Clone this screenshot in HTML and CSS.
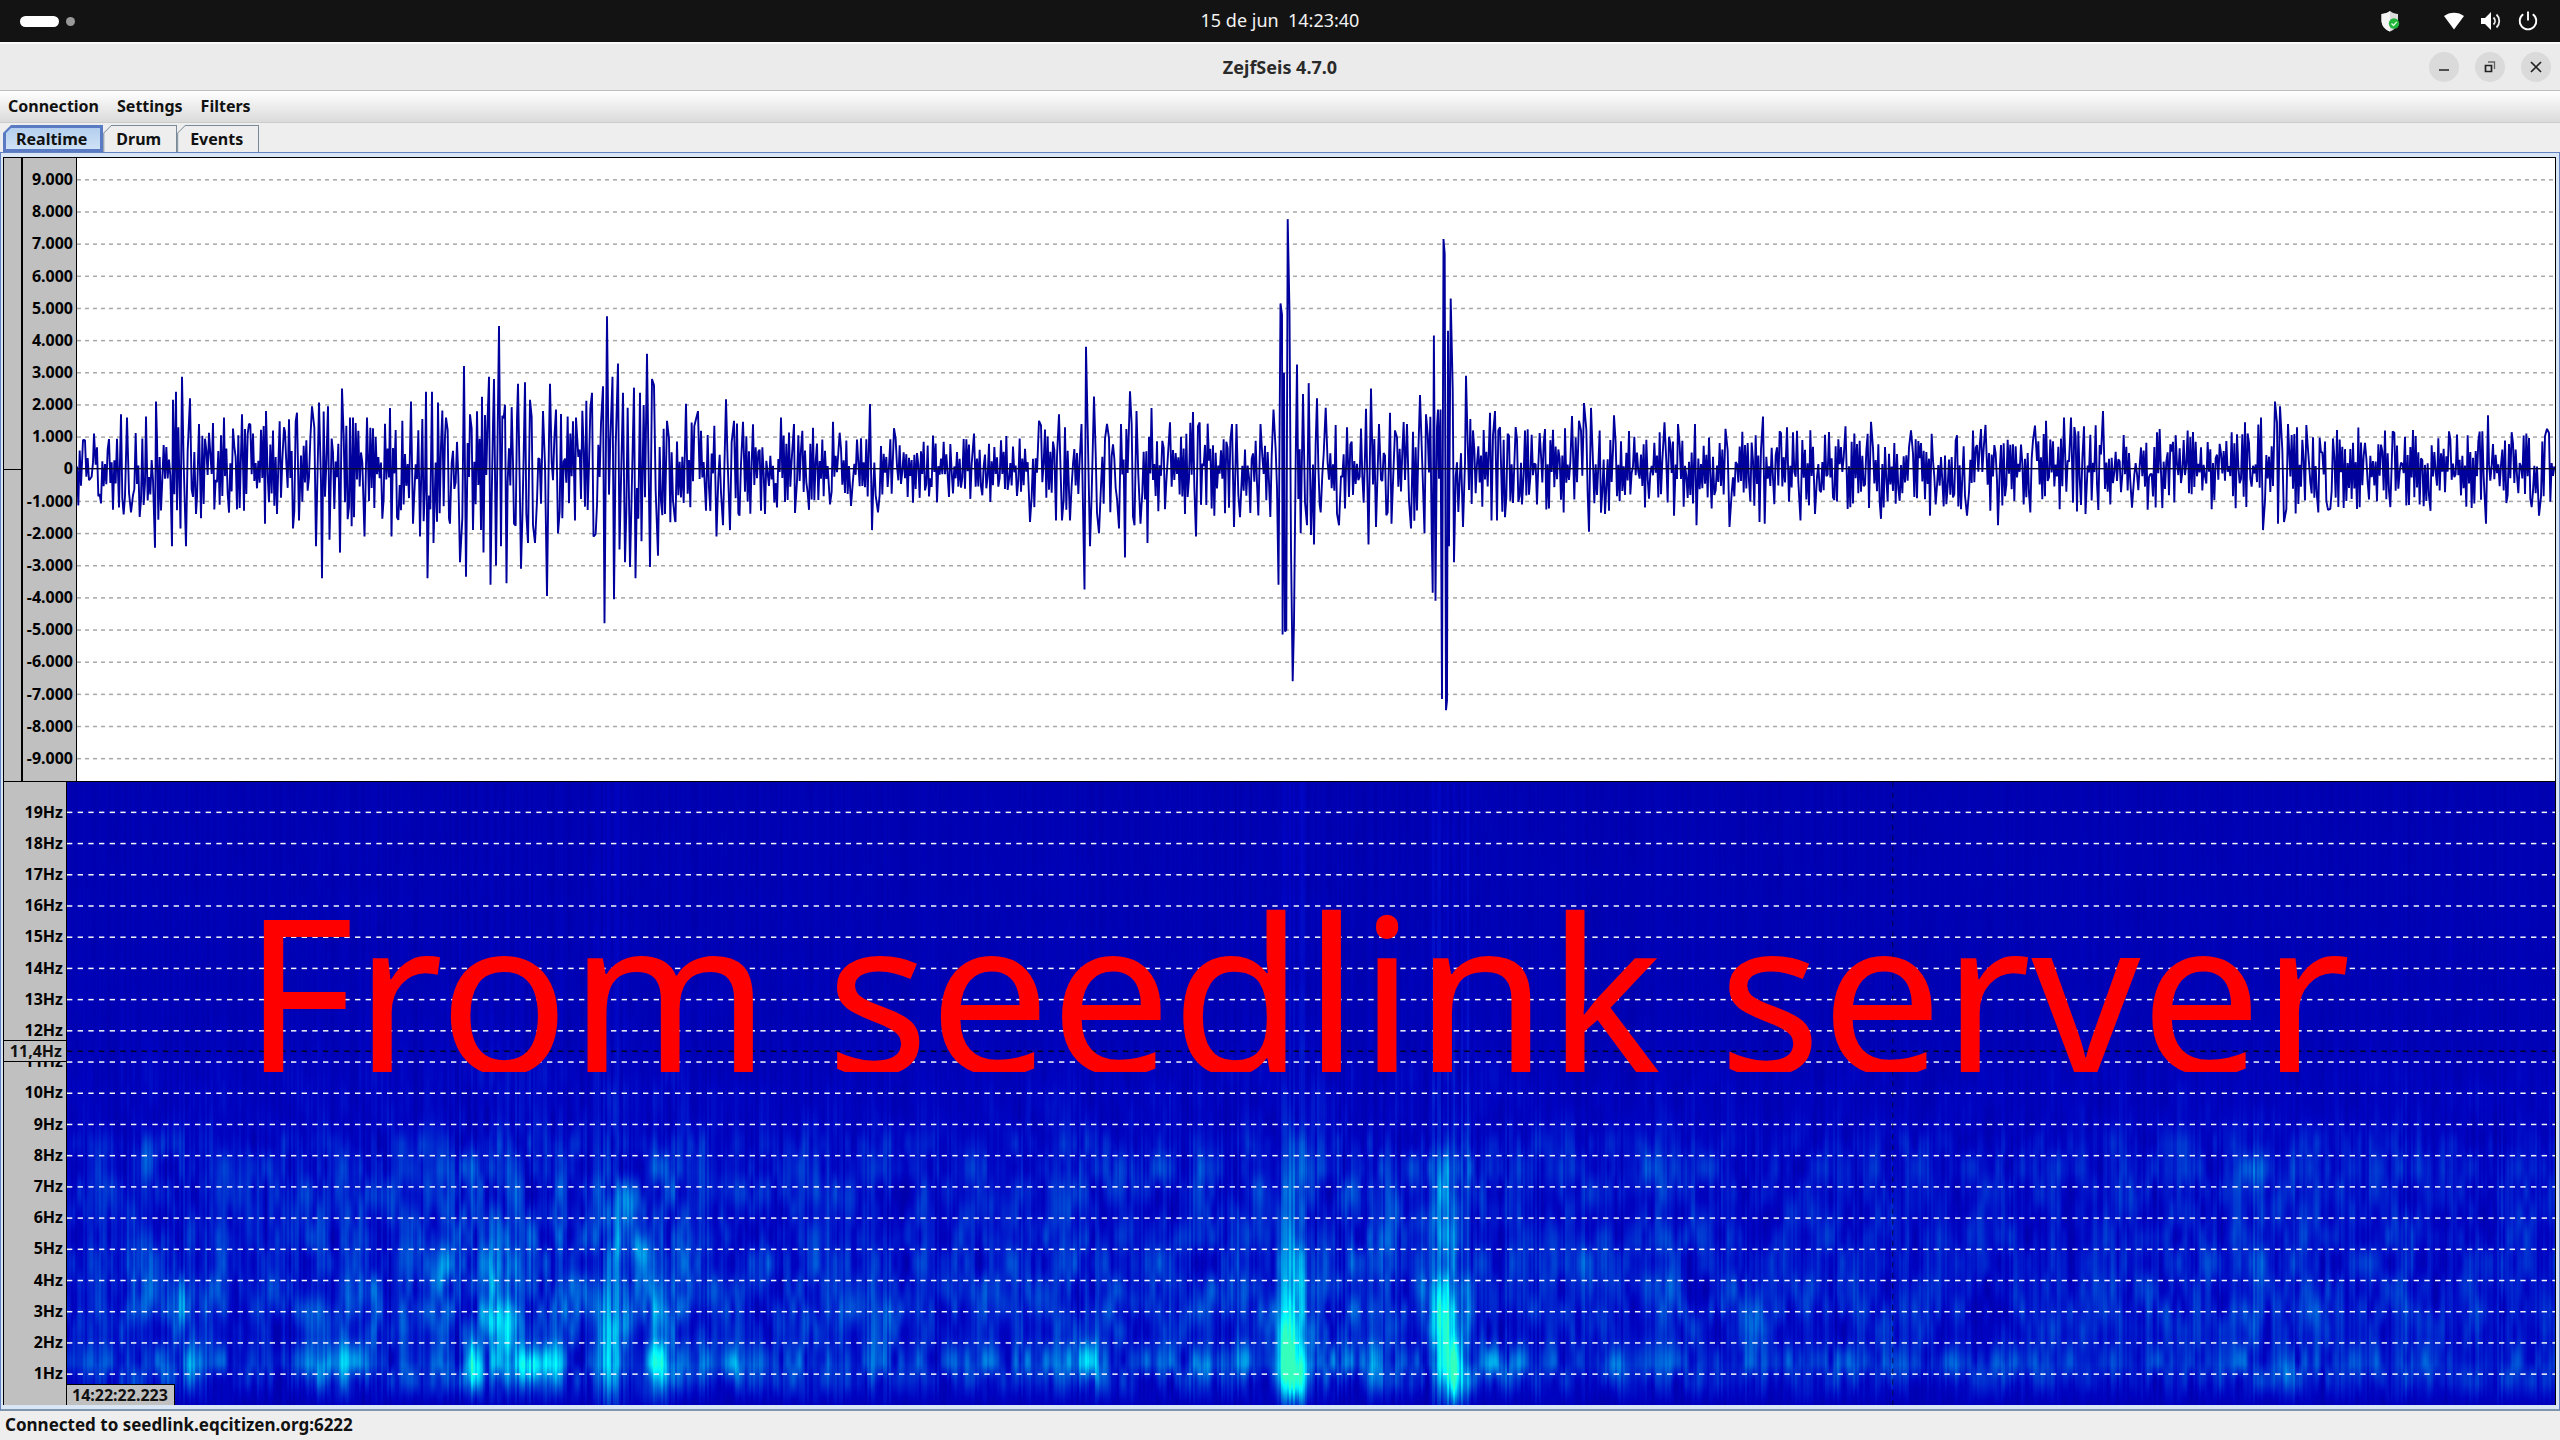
FILE: index.html
```html
<!DOCTYPE html>
<html lang="es">
<head>
<meta charset="utf-8">
<title>ZejfSeis 4.7.0</title>
<link rel="stylesheet" href="styles.css">
</head>
<body>
<header class="topbar">
  <div class="workspaces"><span class="pill"></span><span class="dot"></span></div>
  <time class="clock">15 de jun&nbsp; 14:23:40</time>
  <div class="tray">
    <svg class="shield" width="22" height="22" viewBox="0 0 22 22"><path d="M11 1C8 3.200 5 4 2.500 4v6.500C2.500 15.500 6 19.500 11 21.500c5-2 8-6 8-11V4C16.500 4 14 3.200 11 1z" fill="#dcdcdc"/><path d="M11 1C8 3.200 5 4 2.500 4v6.500C2.500 15.500 6 19.500 11 21.500z" fill="#f4f4f4"/><circle cx="15" cy="13.500" r="5.200" fill="#22b53c"/><path d="M12.500 13.500l2 2 3.200-3.600" fill="none" stroke="#d8ffd8" stroke-width="1.400"/></svg>
    <svg width="22" height="22" viewBox="0 0 22 22"><path d="M1 6C6.500 1.500 15.500 1.500 21 6L11 19.500z" fill="#fff"/></svg>
    <svg width="22" height="22" viewBox="0 0 22 22"><path d="M1 8h4l6-6v18l-6-6H1z" fill="#fff"/><path d="M13.500 7.500c2 2 2 5 0 7M16.500 4.500c3.700 3.700 3.700 9.300 0 13" fill="none" stroke="#eee" stroke-width="1.800"/></svg>
    <svg width="22" height="22" viewBox="0 0 22 22"><path d="M6.200 4.300a8.300 8.300 0 1 0 9.600 0M11 1.500v9" fill="none" stroke="#fff" stroke-width="1.900"/></svg>
  </div>
</header>

<div class="titlebar">
  <span></span>
  <h1 class="title">ZejfSeis 4.7.0</h1>
  <div class="window-buttons">
    <button aria-label="Minimizar"><svg width="14" height="14" viewBox="0 0 14 14"><path d="M2 10h10" stroke="#222" stroke-width="1.500"/></svg></button>
    <button aria-label="Restaurar"><svg width="14" height="14" viewBox="0 0 14 14"><path d="M2.500 5.500h6v6h-6z" fill="none" stroke="#222" stroke-width="1.700"/><path d="M5 2h6.500v7" fill="none" stroke="#666" stroke-width="1.300"/></svg></button>
    <button aria-label="Cerrar"><svg width="14" height="14" viewBox="0 0 14 14"><path d="M2 2l10 10M12 2L2 12" stroke="#222" stroke-width="1.700"/></svg></button>
  </div>
</div>

<nav class="menubar">
  <button>Connection</button>
  <button>Settings</button>
  <button>Filters</button>
</nav>

<div class="tabs" role="tablist">
  <button class="tab selected" role="tab" aria-selected="true">Realtime</button>
  <button class="tab" role="tab" aria-selected="false">Drum</button>
  <button class="tab" role="tab" aria-selected="false">Events</button>
</div>

<main class="pane">
  <section class="panel wave">
    <div class="gauge"></div>
    <ol class="axis wave-axis" id="wave-axis"></ol>
    <div class="plot"><canvas id="wave"></canvas></div>
  </section>
  <section class="panel spectrogram">
    <ol class="axis hz-axis" id="hz-axis"></ol>
    <div class="plot">
      <canvas id="spectro"></canvas>
      <p class="caption">From seedlink server</p>
      <span class="time-tag">14:22:22.223</span>
    </div>
    <span class="hz-tag">11,4Hz</span>
  </section>
</main>

<footer class="status">Connected to seedlink.eqcitizen.org:6222</footer>
<script src="charts.js"></script>
</body>
</html>
```
FILE: styles.css
```css
* { box-sizing: border-box; }

body {
  margin: 0;
  height: 100vh;
  display: flex;
  flex-direction: column;
  overflow: hidden;
  background: #eeeeee;
  color: #111;
  font: bold 16px/22px "Noto Sans", "Open Sans", sans-serif;
}

button {
  border: 0;
  padding: 0;
  background: none;
  color: inherit;
  font: inherit;
}

.topbar, .titlebar {
  display: grid;
  grid-template-columns: 1fr auto 1fr;
  align-items: center;
}

.topbar {
  height: 42px;
  background: #131313;
  color: #f2f2f2;
}

.workspaces { display: flex; align-items: center; gap: 7px; padding-left: 20px; }
.pill { width: 39px; height: 11px; border-radius: 6px; background: #fff; }
.dot { width: 9px; height: 9px; border-radius: 50%; background: #999; }
.clock { padding-bottom: 2px; font-size: 18px; font-weight: 400; }
.tray { display: flex; justify-content: flex-end; gap: 15px; padding-right: 21px; }
.shield { margin-right: 27px; }

.titlebar {
  height: 49px;
  background: #ebebeb;
  border-top: 2px solid #fafafa;
  border-bottom: 1px solid #bdbdbd;
}

.title { margin: 0; font-size: 18px; font-weight: 700; color: #2a2a2a; }
.window-buttons { display: flex; justify-content: flex-end; gap: 16px; padding-right: 9px; }
.window-buttons button {
  display: grid;
  place-items: center;
  width: 30px;
  height: 30px;
  border-radius: 50%;
  background: #dadada;
}

.menubar {
  display: flex;
  gap: 18px;
  padding: 4px 8px 5px;
  background: linear-gradient(#ffffff, #dadada);
  border-bottom: 1px solid #cccccc;
}

.tabs { display: flex; height: 29px; padding: 2px 0 0 3px; }

.tab {
  position: relative;
  height: 27px;
  padding: 0 16px 0 13px;
  background: #7a8a99;
  clip-path: polygon(8px 0, 100% 0, 100% 100%, 0 100%, 0 8px);
  z-index: 0;
}

.tab::before {
  content: "";
  position: absolute;
  inset: 1px 1px 0 1px;
  background: #eeeeee;
  clip-path: polygon(7px 0, 100% 0, 100% 100%, 0 100%, 0 7px);
  z-index: -1;
}

.tab.selected { background: #5a7bc4; }
.tab.selected::before {
  background: linear-gradient(#b4cfee, #cfe2f7);
  border: 1px solid #5a7bc4;
  inset: 2px;
}

.pane {
  flex: 1;
  min-height: 0;
  display: flex;
  flex-direction: column;
  padding: 4px 3px 4px 2px;
  background: #d8e6f5;
  border: solid #6382bf;
  border-width: 1px 1px 2px 1px;
  border-bottom-color: #8096ac;
}

.panel {
  position: relative;
  flex: 1;
  min-height: 0;
  display: grid;
  grid-template-rows: minmax(0, 1fr);
  border: solid #000;
  border-width: 1px 1px 0 1px;
}

.wave { grid-template-columns: 19px 54px minmax(0, 1fr); background: #fff; }
.spectrogram { grid-template-columns: 63px minmax(0, 1fr); }

.gauge {
  background: linear-gradient(#000, #000) center / 100% 1px no-repeat #c0c0c0;
  border-right: 2px solid #000;
}

.axis {
  display: flex;
  flex-direction: column;
  margin: 0;
  list-style: none;
  text-align: right;
  background: #c0c0c0;
  color: #000;
}

.axis li {
  flex: 1;
  min-height: 0;
  display: flex;
  align-items: center;
  justify-content: flex-end;
}

.wave-axis { padding: 5px 3px 7px; border-right: 1px solid #000; }
.hz-axis { padding: 14px 3px 16px; border-right: 1px solid #000; }

.plot { position: relative; min-width: 0; overflow: hidden; }
.plot canvas { display: block; width: 100%; height: 100%; }

.caption {
  position: absolute;
  left: 176px;
  top: 109px;
  height: 181px;
  margin: 0;
  overflow: hidden;
  color: #ff0000;
  font-size: 215px;
  font-weight: 400;
  line-height: 200px;
  white-space: nowrap;
}

.time-tag {
  position: absolute;
  left: 0;
  bottom: 0;
  padding: 0 6px 0 5px;
  background: #c0c0c0;
  border: 1px solid #000;
  border-width: 1px 1px 0 0;
  line-height: 20px;
}

.hz-tag {
  position: absolute;
  left: 0;
  top: 258px;
  width: 63px;
  padding-right: 4px;
  text-align: right;
  line-height: 20px;
  background: #c0c0c0;
  border: solid #000;
  border-width: 1px 1px 1px 0;
}

.status { height: 29px; padding: 3px 5px; font-size: 17px; background: #eeeeee; }
```
FILE: charts.js
```js
// Axis labels
const waveAxis = document.getElementById("wave-axis");
for (let v = 9; v >= -9; v--) {
  const li = document.createElement("li");
  li.textContent = v === 0 ? "0" : v + ".000";
  waveAxis.append(li);
}
const hzAxis = document.getElementById("hz-axis");
for (let f = 19; f >= 1; f--) {
  const li = document.createElement("li");
  li.textContent = f + "Hz";
  hzAxis.append(li);
}

const SPAN = 2478;      // time units across the waveform
const X0 = 77;          // time of its left edge

// Peaks: time, counts in thousands
const PEAKS = [
  83,.9, 94,1.1, 121,1.7, 127,1.6, 146,1.63, 156,2.1, 173,2.15, 176,2.4, 182,2.87, 190,2.2, 199,1.4, 224,1.6,
  242,1.7, 249,1.4, 266,1.8, 284,1.3, 297,1.75, 312,1.95, 319,2.07, 328,1.95, 342,2.5, 350,1.6, 367,1.6,
  390,1.9, 411,2.1, 426,2.4, 432,2.4, 438,2.07, 446,1.6, 464,3.2, 470,1.7, 482,2.25, 489,2.87, 494,2.8,
  499,4.45, 505,2, 518,2.65, 525,2.7, 530,2.15, 543,1.8, 550,2.65, 556,1.85, 576,1.6, 592,2.37, 603,2.57,
  607,4.75, 612.5,2.87, 618,3.28, 623,2.37, 634,2.53, 640,2.37, 647,3.58, 652,2.8, 654,2.6, 667,1.5, 686,2.03, 698,1.8,
  119,-1.2, 131,-1.35, 155,-2.45, 172,-2.4, 180.5,-1.85, 186,-2.4, 196,-1.4, 244,-1.3, 265,-1.7, 293,-1.85,
  299,-1.6, 316,-2.4, 322,-3.4, 329.5,-2.2, 340,-2.6, 354,-1.5, 364.5,-2.1, 391.5,-2.1, 397,-1.5, 413,-1.7,
  420,-2.1, 427.5,-3.4, 433.5,-2.3, 450,-1.7, 460,-2.9, 466,-3.35, 473,-1.9, 483.5,-2.6, 490.5,-3.6, 496,-3,
  501,-2.4, 506.5,-3.55, 514,-1.7, 521,-3.1, 528,-2.3, 535,-2.3, 547,-3.95, 558,-2, 575,-1.6, 593.5,-2.1,
  604.5,-4.8, 614,-4.05, 619.5,-2.5, 625,-2.9, 630,-3.05, 635.5,-3.4, 641.5,-2.25, 650,-3.05, 658,-2.7, 675.5,-1.65,
  726,2.17, 734,1.5, 743,1.47, 781,1.6, 794,1.4, 833,1.47, 870,2.02, 894,1.27, 974,1.1, 1039,1.5, 1059,1.7,
  1065,1.3, 1081.5,1.4, 1086,3.8, 1094,2.25, 1107,1.4, 1121,1.4, 1130,2.42, 1136.5,1.8, 1151.5,1.9, 1170,1.45,
  1193,1.77, 1198,1.33, 1232,1.4, 1236.5,1.4, 1260.5,1.4, 1273.5,1.85,
  675,-1.6, 706,-1.3, 716.5,-2.1, 723,-1.75, 730,-1.9, 739.5,-1.45, 765,-1.4, 795,-1.37, 809,-1.27, 830,-1.1,
  851,-1.15, 872,-1.9, 878,-1.35, 913,-1.05, 1030,-1.65, 1056,-1.6, 1062,-1.6, 1070,-1.6, 1084.5,-3.75,
  1090,-2.4, 1099,-2, 1119,-1.85, 1125,-2.75, 1134.5,-1.75, 1140.5,-1.7, 1147.5,-2.3, 1185,-1.4, 1196,-2.1,
  1234,-1.8, 1240,-1.5,
  1278.5,-3.6, 1280.5,5.15, 1282,4.8, 1282.6,-5.15, 1284,3, 1285,-5.05, 1286.3,-5, 1287.7,7.77, 1289.5,4.9,
  1291,-2.5, 1292.7,-6.6, 1294,-4.8, 1297,3.25, 1300.7,-2, 1303,2.33, 1307,-1.75, 1308.7,2.67, 1311,-2.05,
  1314,-2.35, 1317,2.2, 1320.7,-1.35, 1325.7,1.9, 1339,-1.75, 1347,1.3, 1366,1.87, 1368.5,-2.35, 1371,2.5,
  1376,-1.8, 1379,1.4, 1390,1.75, 1391.5,-1.7, 1395,1.2, 1407,1.4, 1411,-1.85, 1420,2.3, 1424.5,-2, 1426,1.7,
  1431.7,-2, 1432.7,-3.85, 1433.9,4.15, 1435.5,-4.1, 1438,1.85, 1439,-.3, 1440.5,1.85, 1442,-7.15, 1443.5,7.15,
  1444.7,6.7, 1446,-7.5, 1447,-7.2, 1448,4.3, 1449,-2.4, 1450.7,5.3, 1452.7,2.5, 1454,-2.9, 1463,-1.8, 1466,2.9,
  1473,1.2, 1490,1.75, 1491.5,-1.6, 1495,1.8, 1497,-1.6, 1500,1.3, 1505,-1.5, 1522,-1.1, 1525,1.2,
  1572,1.65, 1579,1.5, 1584,2.05, 1591,1.9, 1614,1.67, 1664.5,1.45, 1678,1.4, 1695,1.4, 1725.5,1.25, 1763,1.63,
  1787,1.3, 1845.5,1.33, 1871,1.47, 1911,1.2, 1985.5,1.37, 2035,1.35, 2046,1.5, 2064,1.6, 2071,1.6, 2084,1.33,
  2103,1.8, 2245,1.45, 2261,1.6, 2275,2.1, 2280,1.95, 2288,1.4, 2297,1.3, 2392.7,1.17, 2488,1.67, 2547,1.25,
  1589,-1.95, 1605,-1.4, 1674,-1.45, 1696.5,-1.75, 1729.5,-1.8, 1759.5,-1.65, 1764.7,-1.7, 1800.5,-1.6,
  1815,-1.4, 1881,-1.55, 1930,-1.45, 1967,-1.45, 1998,-1.75, 2085.5,-1.4, 2132,-1.2, 2263,-1.9, 2278,-1.7,
  2284,-1.65, 2328,-1.27, 2430.5,-1.3, 2486,-1.7, 2539,-1.45
];

// Background level: time, amplitude
const LEVEL = [
  77,.9, 150,1.3, 200,1.3, 240,1.05, 320,1.5, 400,1.25, 480,1.6, 560,1.6, 600,1.7, 650,1.7, 680,1.2, 760,1.1,
  860,1, 900,.8, 1000,.85, 1060,1.2, 1200,1.15, 1280,1.2, 1420,1.3, 1460,1.3, 1520,1, 1600,1.15, 1640,.95,
  1750,1.05, 1900,.95, 2000,1.05, 2100,1.1, 2180,.95, 2270,1.15, 2400,.95, 2560,.95
];

function interpolate(table, x) {
  for (let i = 0; i < table.length - 2; i += 2) {
    if (x < table[i + 2]) {
      const k = Math.max(0, (x - table[i]) / (table[i + 2] - table[i]));
      return table[i + 1] + k * (table[i + 3] - table[i + 1]);
    }
  }
  return table[table.length - 1];
}

function generator(seed) {
  let s = seed;
  return () => {
    s = (s + 0x6d2b79f5) | 0;
    let t = Math.imul(s ^ (s >>> 15), 1 | s);
    t = (t + Math.imul(t ^ (t >>> 7), 61 | t)) ^ t;
    return ((t ^ (t >>> 14)) >>> 0) / 4294967296;
  };
}

function fit(canvas) {
  const w = canvas.clientWidth, h = canvas.clientHeight;
  canvas.width = w;
  canvas.height = h;
  return [canvas.getContext("2d"), w, h];
}

function dashes(ctx, w, y, color, on, start) {
  ctx.fillStyle = color;
  for (let x = start; x < w; x += on * 2) ctx.fillRect(x, y, on, 1.5);
}

function drawWave() {
  const [ctx, w, h] = fit(document.getElementById("wave"));
  const step = (h - 12) / 19, mid = h / 2 - .5;
  for (let v = -9; v <= 9; v++) {
    if (v !== 0) dashes(ctx, w, mid - v * step - .5, "#a8a8a8", 4, 0);
  }
  const points = [];
  for (let i = 0; i < PEAKS.length; i += 2) points.push([PEAKS[i], PEAKS[i + 1]]);
  const peakTimes = points.map(p => p[0]);
  const rnd = generator(7);
  let sign = 1;
  for (let x = X0; x < X0 + SPAN; x += 4 / 3) {
    const v = (Math.pow(rnd(), 1.2) * 1.2 + .08) * interpolate(LEVEL, x) * sign;
    if (rnd() < .8) sign = -sign;
    if (!peakTimes.some(p => Math.abs(p - x) < 1)) points.push([x, v]);
  }
  points.sort((a, b) => a[0] - b[0]);
  ctx.strokeStyle = "#00009c";
  ctx.lineWidth = 1.9;
  ctx.lineJoin = "bevel";
  ctx.beginPath();
  for (const [x, v] of points) ctx.lineTo((x - X0) / SPAN * w, mid - v * step);
  ctx.stroke();
  ctx.fillStyle = "#0a0a30";
  ctx.fillRect(0, mid - 1, w, 1.4);
}

// Energy bursts: x, y, half width, half height, strength (on a 2489 x 623 field)
const BURSTS = [
  [124,583,8,22,.32],[117,522,12,18,.22],[256,583,9,14,.22],[279,573,9,30,.22],
  [406,583,8,18,.58],[464,584,10,14,.58],[486,580,9,18,.28],[431,508,13,50,.24],[439,548,10,40,.24],
  [424,540,8,14,.18],[542,558,8,50,.42],[592,583,9,28,.38],[574,465,8,14,.3],[550,458,8,22,.25],
  [562,428,12,16,.22],[562,525,12,20,.22],[585,490,9,30,.18],[372,483,10,14,.25],[344,450,10,20,.18],[365,500,10,30,.15],
  [665,583,8,14,.3],[810,550,11,45,.2],[1026,580,8,20,.35],[1020,560,16,34,.1],
  [1224,584,10,20,.95],[1223,543,7,32,.5],[1225,458,11,60,.24],[1216,570,6,36,.3],[1230,605,8,20,.25],
  [1387,583,8,22,.95],[1380,548,6,26,.6],[1370,528,7,20,.3],[1380,458,7,70,.3],[1388,606,7,20,.25],
  [1309,575,8,22,.25],[1317,460,12,50,.1],[1139,584,10,12,.2],[1437,584,12,14,.22],[1546,584,10,14,.25],[1176,575,8,20,.15],
  [2220,584,8,16,.28],[2184,386,12,12,.25],[1580,386,20,16,.12],[1524,480,14,50,.15],[1604,500,12,40,.14],
  [1690,540,14,20,.12],[2190,470,16,60,.12],[1885,584,60,12,.1],[82,370,12,16,.12],[70,490,18,60,.1],[1070,386,30,14,.14]
];

// Column loudness: x, factor
const LOUDNESS = [
  0,.7, 100,1, 180,.8, 300,1.1, 420,1.3, 520,1.1, 600,1.3, 660,.95, 900,.8, 1000,.95, 1200,.95, 1230,1.2,
  1300,1, 1380,1.2, 1450,.85, 1600,.85, 1900,.75, 2200,.9, 2489,.75
];

const PALETTE = [
  [0, 0, 0, 172], [.1, 0, 4, 194], [.2, 0, 28, 204], [.35, 0, 70, 212], [.55, 0, 130, 226],
  [.75, 0, 195, 240], [.95, 0, 250, 255], [1.25, 50, 255, 190], [3, 60, 255, 180]
];

function lattice(cols, rows, seed) {
  const rnd = generator(seed);
  const data = Float32Array.from({ length: cols * rows }, rnd);
  return (x, y) => {
    const xi = Math.floor(x), yi = Math.floor(y);
    let fx = x - xi, fy = y - yi;
    fx = fx * fx * (3 - 2 * fx);
    fy = fy * fy * (3 - 2 * fy);
    const a = data[yi * cols + xi], b = data[yi * cols + xi + 1];
    const c = data[(yi + 1) * cols + xi], d = data[(yi + 1) * cols + xi + 1];
    return (a + (b - a) * fx) * (1 - fy) + (c + (d - c) * fx) * fy;
  };
}

function drawSpectrogram() {
  const [ctx, w, h] = fit(document.getElementById("spectro"));
  const sx = 2489 / w, sy = 623 / h;
  const coarse = lattice(260, 30, 11), fine = lattice(520, 40, 23), rnd = generator(5);
  const streak = new Float32Array(w);
  for (let x = 0; x < w; x += 2) streak[x] = streak[x + 1] = rnd() - .5;
  const field = new Float32Array(w * h);
  const profile = [0,.06, .4,.14, 1.3,.32, 2.2,.2, 3,.24, 4.5,.22, 6,.18, 7.5,.2, 8.4,.17, 9.2,.1, 10.5,.08, 12,.04, 20,.01];
  for (let y = 0; y < h; y++) {
    const p = interpolate(profile, (h - y) / h * 20);
    const soft = Math.min(1, p * 5);
    for (let x = 0; x < w; x++) {
      const ux = x * sx, uy = y * sy;
      const n = coarse(ux / 14, uy / 32) * .5 + fine(ux / 6, uy / 24) * .5;
      field[y * w + x] = p * (n * 2.2 - .15) * (.6 + .4 * soft) + streak[x] * (.04 + soft * .1);
    }
  }
  for (let x = 0; x < w; x++) {
    const k = interpolate(LOUDNESS, x * sx);
    for (let y = 0; y < h; y++) field[y * w + x] *= k;
  }
  for (const [bx, by, rx, ry, a] of BURSTS) {
    const x1 = Math.max(0, Math.floor((bx - 3 * rx) / sx)), x2 = Math.min(w, (bx + 3 * rx) / sx);
    const y1 = Math.max(0, Math.floor((by - 3 * ry) / sy)), y2 = Math.min(h, (by + 3 * ry) / sy);
    for (let y = y1; y < y2; y++) for (let x = x1; x < x2; x++) {
      const dx = (x * sx - bx) / rx, dy = (y * sy - by) / ry;
      field[y * w + x] += a * Math.exp(-(dx * dx + dy * dy) / 1.6) * (1 + streak[x] * .45);
    }
  }
  // The loud arrivals leave faint lines over the whole height
  for (const [cx, half, strength] of [[1224, 14, .05], [1384, 18, .05], [545, 14, .03]]) {
    for (let x = Math.round((cx - half) / sx); x < (cx + half) / sx; x++) {
      const g = strength * (streak[x] + .6);
      for (let y = 0; y < h; y++) field[y * w + x] += g * (1 + y / h);
    }
  }
  const image = ctx.createImageData(w, h);
  for (let i = 0; i < field.length; i++) {
    const t = Math.min(2.9, Math.max(0, field[i] + .02));
    let k = 0;
    while (t >= PALETTE[k + 1][0]) k++;
    const a = PALETTE[k], b = PALETTE[k + 1], m = (t - a[0]) / (b[0] - a[0]);
    for (let c = 0; c < 3; c++) image.data[i * 4 + c] = a[c + 1] + (b[c + 1] - a[c + 1]) * m;
    image.data[i * 4 + 3] = 255;
  }
  ctx.putImageData(image, 0, 0);

  const step = (h - 30) / 19;
  for (let f = 1; f < 20; f++) dashes(ctx, w, h - 16 - (f - .5) * step, "#f4f6fc", 16 / 3, 0);
  // Cursor cross-hair
  dashes(ctx, w, h * .431, "#000028", 16 / 3, 0);
  ctx.fillStyle = "rgba(0,0,40,.6)";
  for (let y = 0; y < h; y += 32 / 3) ctx.fillRect(w * .7335, y, 1.3, 16 / 3);
}

function draw() {
  drawWave();
  drawSpectrogram();
}
draw();
window.addEventListener("resize", draw);
```
